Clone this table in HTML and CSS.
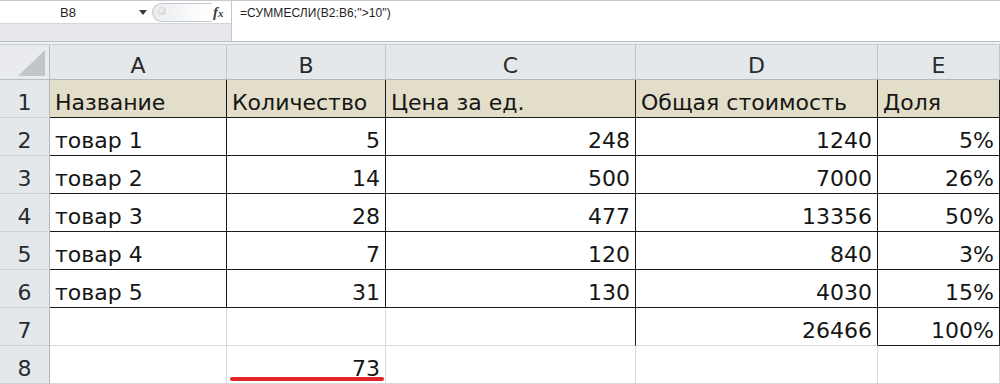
FILE: index.html
```html
<!DOCTYPE html>
<html lang="ru">
<head>
<meta charset="utf-8">
<title>Excel</title>
<link rel="stylesheet" href="styles.css">
</head>
<body>
<div class="app">
  <div class="fbar">
    <div class="fleft">
      <div class="namerow">
        <div class="namebox">B8</div>
        <svg class="dd" width="8" height="5" viewBox="0 0 8 5"><path d="M0 0H8L4 5Z" fill="#3a3a3a"/></svg>
        <div class="pill"><span class="dot"></span></div>
        <span class="fx">f<span class="fxx">x</span></span>
      </div>
      <div class="fgrey"></div>
    </div>
    <div class="formula">=СУММЕСЛИ(B2:B6;"&gt;10")</div>
  </div>
  <div class="sep"></div>
  <div class="sheet">
    <div class="corner"><span class="tri"></span></div>
    <div class="ch">A</div>
    <div class="ch">B</div>
    <div class="ch">C</div>
    <div class="ch">D</div>
    <div class="ch">E</div>

    <div class="rh">1</div>
    <div class="c t hd bk">Название</div>
    <div class="c t hd bk">Количество</div>
    <div class="c t hd bk">Цена за ед.</div>
    <div class="c t hd bk">Общая стоимость</div>
    <div class="c t hd bk">Доля</div>

    <div class="rh">2</div>
    <div class="c t bk">товар 1</div>
    <div class="c n bk">5</div>
    <div class="c n bk">248</div>
    <div class="c n bk">1240</div>
    <div class="c n bk">5%</div>

    <div class="rh">3</div>
    <div class="c t bk">товар 2</div>
    <div class="c n bk">14</div>
    <div class="c n bk">500</div>
    <div class="c n bk">7000</div>
    <div class="c n bk">26%</div>

    <div class="rh">4</div>
    <div class="c t bk">товар 3</div>
    <div class="c n bk">28</div>
    <div class="c n bk">477</div>
    <div class="c n bk">13356</div>
    <div class="c n bk">50%</div>

    <div class="rh">5</div>
    <div class="c t bk">товар 4</div>
    <div class="c n bk">7</div>
    <div class="c n bk">120</div>
    <div class="c n bk">840</div>
    <div class="c n bk">3%</div>

    <div class="rh">6</div>
    <div class="c t bk">товар 5</div>
    <div class="c n bk">31</div>
    <div class="c n bk">130</div>
    <div class="c n bk">4030</div>
    <div class="c n bk">15%</div>

    <div class="rh">7</div>
    <div class="c t"></div>
    <div class="c n"></div>
    <div class="c n br"></div>
    <div class="c n br">26466</div>
    <div class="c n bk">100%</div>

    <div class="rh">8</div>
    <div class="c t"></div>
    <div class="c n sel">73<span class="uline"></span></div>
    <div class="c n"></div>
    <div class="c n"></div>
    <div class="c n"></div>
  </div>
</div>
</body>
</html>
```
FILE: styles.css
```css
* { box-sizing: border-box; }
html, body { margin: 0; padding: 0; background: #fff; }
body { width: 1000px; height: 384px; overflow: hidden; }

.app { display: flex; flex-direction: column; width: 1000px; }

.fbar {
  display: flex;
  height: 41px;
  border-top: 1px solid #c6cacf;
  font-family: "Liberation Sans", Arial, sans-serif;
  font-size: 12px;
  color: #1e1e1e;
}
.fleft {
  width: 232px;
  display: flex;
  flex-direction: column;
  border-right: 1px solid #c4c8cc;
}
.namerow {
  height: 22px;
  display: flex;
  align-items: center;
  background: #fff;
}
.namebox {
  width: 139px;
  padding-left: 60px;
  font-size: 13px;
  padding-top: 1px;
}
.dd { margin-top: 1px; }
.pill {
  margin-left: 5px;
  width: 60px;
  height: 19px;
  border: 1px solid #c5c9ce;
  border-right: none;
  border-radius: 10px 0 0 10px;
  background: linear-gradient(to right, #e9ebee, #f8f9fa 60%, #fff);
  position: relative;
}
.dot {
  position: absolute;
  left: 5px;
  top: 3px;
  width: 8px;
  height: 8px;
  border-radius: 50%;
  background: radial-gradient(circle at 40% 40%, #f5f5f5, #c4c6c8);
}
.fx {
  margin-left: 1px;
  font-family: "Liberation Serif", serif;
  font-style: italic;
  font-weight: bold;
  font-size: 15px;
  color: #3c3c3c;
}
.fxx { font-size: 11px; }
.fgrey {
  flex: 1;
  background: #e7e9ec;
  border-top: 1px solid #d3d6da;
}
.formula {
  flex: 1;
  background: #fff;
  padding: 5px 0 0 8px;
  font-size: 12px;
  letter-spacing: 0.1px;
}

.sep {
  height: 4px;
  border-top: 1px solid #b9bdc2;
  border-bottom: 1px solid #c9ccd0;
  background: #f1f2f3;
}

.sheet {
  display: grid;
  grid-template-columns: 50px 177px 159px 250px 242px 122px;
  grid-template-rows: 35px repeat(8, 38px);
  font-family: "DejaVu Sans", sans-serif;
  font-size: 22px;
  color: #151515;
}

.corner {
  background: #e9ebee;
  border-right: 1px solid #b9bdc2;
  border-bottom: 1px solid #b9bdc2;
  position: relative;
}
.tri {
  position: absolute;
  right: 4px;
  bottom: 3px;
  width: 0;
  height: 0;
  border-left: 27px solid transparent;
  border-bottom: 26px solid #c3c6c9;
}
.ch {
  background: #e5e8eb;
  border-right: 1px solid #c2c6cb;
  border-bottom: 1px solid #b3b7bc;
  display: flex;
  justify-content: center;
  align-items: flex-end;
  padding-bottom: 1px;
  line-height: 24px;
  color: #2a2a2a;
}
.rh {
  background: #e5e8eb;
  border-right: 1px solid #b3b7bc;
  border-bottom: 1px solid #cdd0d4;
  display: flex;
  justify-content: center;
  align-items: flex-end;
  padding-bottom: 2px;
  line-height: 24px;
  color: #2a2a2a;
}
.c {
  border-right: 1px solid #d9d9d9;
  border-bottom: 1px solid #d9d9d9;
  display: flex;
  align-items: flex-end;
  padding: 0 5px 2px 5px;
  line-height: 24px;
  white-space: nowrap;
  position: relative;
}
.t { justify-content: flex-start; }
.n { justify-content: flex-end; }
.hd { background: #e3dec9; }
.bk { border-right-color: #1a1a1a; border-bottom-color: #1a1a1a; }
.br { border-right-color: #1a1a1a; }

.uline {
  position: absolute;
  left: 3px;
  right: 1px;
  bottom: 2px;
  height: 4px;
  border-radius: 2px;
  background: #e1262a;
}
```
